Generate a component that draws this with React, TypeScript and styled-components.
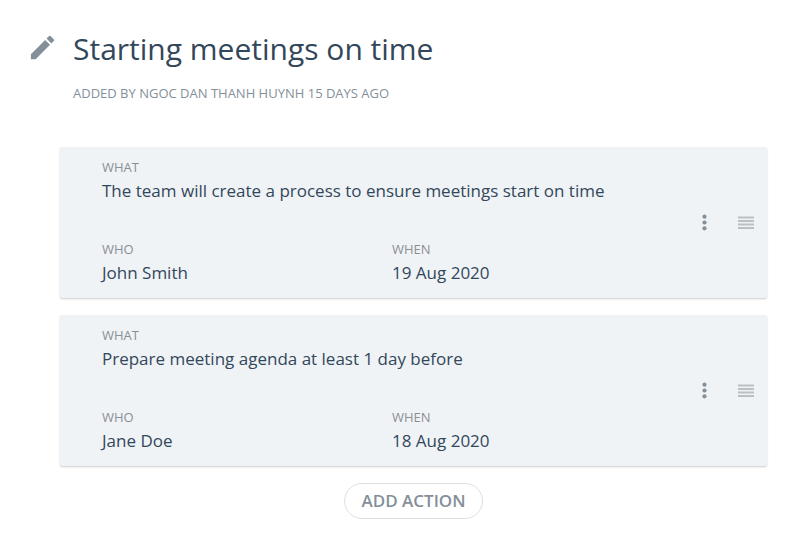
import React from "react";
import styled, { createGlobalStyle } from "styled-components";

const GlobalStyle = createGlobalStyle`
  *, *::before, *::after { box-sizing: border-box; }
  body {
    margin: 0;
    background: #ffffff;
    color: #33475b;
    font-family: "Open Sans", "Noto Sans", sans-serif;
  }
  h1, p, dl, dt, dd, ul { margin: 0; padding: 0; }
  button { font: inherit; cursor: pointer; }
`;

const Page = styled.main`
  padding: 28px 45px 18px 27px;
`;

const Header = styled.header`
  display: flex;
  align-items: flex-start;
  gap: 15px;
`;

const IconButton = styled.button<{ $tone: string }>`
  display: flex;
  flex: none;
  padding: 0;
  border: 0;
  background: none;
  color: ${(p) => p.$tone};
`;

const EditButton = styled(IconButton)`
  margin-top: 4px;
`;

const Title = styled.h1`
  font-size: 30px;
  font-weight: 400;
  line-height: 42px;
`;

const Byline = styled.p`
  margin-top: 14px;
  font-size: 13px;
  line-height: 18px;
  color: #848f99;
  text-transform: uppercase;
`;

const ActionList = styled.ul`
  display: flex;
  flex-direction: column;
  gap: 17px;
  margin: 45px 0 0 33px;
  list-style: none;
`;

const ActionCard = styled.li`
  display: flex;
  align-items: center;
  padding: 10px 12px 12px 42px;
  border-radius: 2px;
  background: #eff3f6;
  box-shadow: 0 1px 2px rgba(0, 0, 0, 0.2);
`;

const Details = styled.dl`
  display: grid;
  flex: 1;
  grid-template-columns: 290px 1fr;
  row-gap: 35px;
`;

const Field = styled.div<{ $wide?: boolean }>`
  grid-column: ${(p) => (p.$wide ? "1 / -1" : "auto")};
`;

const Label = styled.dt`
  font-size: 13px;
  line-height: 20px;
  color: #8a8f95;
  text-transform: uppercase;
`;

const Value = styled.dd`
  font-size: 17px;
  line-height: 27px;
`;

const Controls = styled.div`
  display: flex;
  align-items: center;
  gap: 21px;
`;

const Footer = styled.footer`
  display: flex;
  justify-content: center;
  margin: 17px 0 0 33px;
`;

const AddButton = styled.button`
  height: 36px;
  padding: 0 16px 2px;
  border: 1px solid #dcdfe2;
  border-radius: 18px;
  background: #ffffff;
  color: #848f99;
  && { font-size: 17px; font-weight: 600; }
  text-transform: uppercase;
`;

const PencilIcon = () => (
  <svg width="31" height="31" viewBox="0 0 24 24" fill="currentColor" aria-hidden="true">
    <path d="M3 17.25V21h3.75L17.81 9.94l-3.75-3.75L3 17.25zM20.71 7.04a1 1 0 0 0 0-1.41l-2.34-2.34a1 1 0 0 0-1.41 0l-1.83 1.83 3.75 3.75 1.83-1.83z" />
  </svg>
);

const MoreIcon = () => (
  <svg width="24" height="24" viewBox="0 0 24 24" fill="currentColor" aria-hidden="true">
    <circle cx="12.5" cy="6.7" r="2.1" />
    <circle cx="12.5" cy="12.5" r="2.1" />
    <circle cx="12.5" cy="18.3" r="2.1" />
  </svg>
);

const DragIcon = () => (
  <svg width="18" height="18" viewBox="0 0 18 18" fill="currentColor" aria-hidden="true">
    <path d="M1 3.5h16v2H1zM1 7h16v2H1zM1 10.5h16v2H1zM1 14h16v2H1z" />
  </svg>
);

const actions = [
  { what: "The team will create a process to ensure meetings start on time", who: "John Smith", when: "19 Aug 2020" },
  { what: "Prepare meeting agenda at least 1 day before", who: "Jane Doe", when: "18 Aug 2020" },
];

export default function App() {
  return (
    <Page>
      <GlobalStyle />
      <Header>
        <EditButton $tone="#848f99" type="button" aria-label="Edit title">
          <PencilIcon />
        </EditButton>
        <div>
          <Title>Starting meetings on time</Title>
          <Byline>Added by Ngoc Dan Thanh Huynh 15 days ago</Byline>
        </div>
      </Header>
      <ActionList>
        {actions.map((action) => (
          <ActionCard key={action.what}>
            <Details>
              <Field $wide>
                <Label>What</Label>
                <Value>{action.what}</Value>
              </Field>
              <Field>
                <Label>Who</Label>
                <Value>{action.who}</Value>
              </Field>
              <Field>
                <Label>When</Label>
                <Value>{action.when}</Value>
              </Field>
            </Details>
            <Controls>
              <IconButton $tone="#848f99" type="button" aria-label="More options">
                <MoreIcon />
              </IconButton>
              <IconButton $tone="#bcc0c4" type="button" aria-label="Reorder action">
                <DragIcon />
              </IconButton>
            </Controls>
          </ActionCard>
        ))}
      </ActionList>
      <Footer>
        <AddButton type="button">Add action</AddButton>
      </Footer>
    </Page>
  );
}
